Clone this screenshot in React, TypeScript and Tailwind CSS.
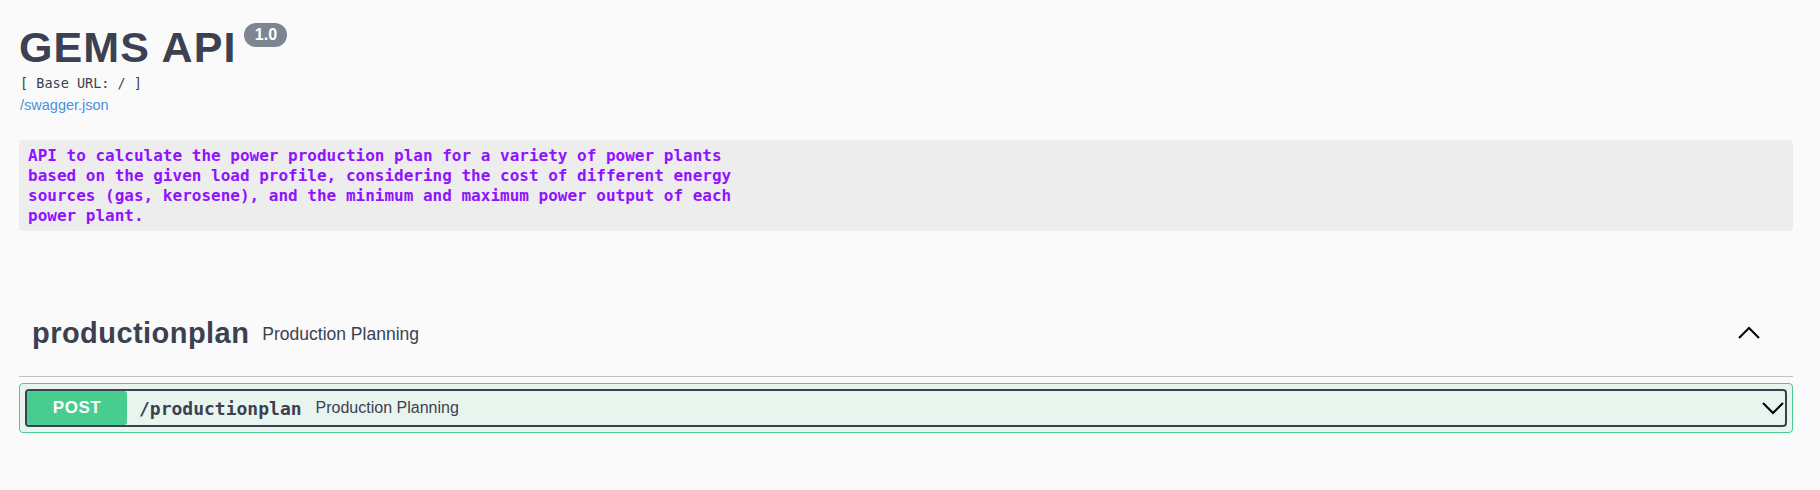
import React from 'react';

const sans = { fontFamily: '"Liberation Sans", Arial, sans-serif' };

const ChevronUp = () => (
  <svg width="22" height="13" viewBox="0 0 22 13" fill="none" className="block">
    <polyline points="1,12 11,2 21,12" stroke="#000" strokeWidth="2" />
  </svg>
);

const ChevronDown = () => (
  <svg width="22" height="13" viewBox="0 0 22 13" fill="none" className="block">
    <polyline points="1,1 11,11 21,1" stroke="#000" strokeWidth="2" />
  </svg>
);

export default function App() {
  return (
    <div className="min-h-screen bg-[#fafafa] pl-[19px] pr-[27px] pt-[23px] text-[#3b4151] font-['Liberation_Sans',Arial,sans-serif]">
      {/* info header */}
      <div className="flex items-start">
        <h2 className="text-[43px] leading-[48px] font-bold tracking-[1.1px] text-[#3b4151]">GEMS API</h2>
        <span className="ml-[8px] flex h-[24px] w-[43px] items-center justify-center rounded-full bg-[#7d8492] text-[16px] font-bold text-white">
          1.0
        </span>
      </div>
      <div className="mt-[4px] pl-[1px] font-['DejaVu_Sans_Mono',monospace] text-[13.5px] leading-[16px] text-[#3b4151]">
        [ Base URL: / ]
      </div>
      <div className="mt-[6px] pl-[1px] text-[14.5px] leading-[16px]">
        <a className="text-[#4990e2]" href="#">/swagger.json</a>
      </div>

      <div className="mt-[27px] rounded-[4px] bg-[#ededed] pl-[9px] pt-[6px] pb-[5px]">
        <pre className="font-['DejaVu_Sans_Mono',monospace] text-[16px] leading-[20px] font-bold text-[#9012fe]">
{`API to calculate the power production plan for a variety of power plants
based on the given load profile, considering the cost of different energy
sources (gas, kerosene), and the minimum and maximum power output of each
power plant.`}
        </pre>
      </div>

      {/* tag section */}
      <div className="mt-[61px] flex h-[85px] items-center border-b border-[#c1c3c7] pl-[13px] pr-[33px]">
        <span className="text-[29px] font-bold tracking-[0.45px]" style={sans}>productionplan</span>
        <span className="ml-[13px] text-[17.5px]" style={sans}>Production Planning</span>
        <div className="ml-auto mb-[3px]">
          <ChevronUp />
        </div>
      </div>

      <div className="mt-[6px] rounded-[4px] border border-[#49cc90] bg-[#e8f5ef] p-[5px]">
        <div className="flex h-[38px] items-center rounded-[4px] border-2 border-[#3b4151] pr-[1px]">
          <span className="flex h-full w-[100px] items-center justify-center rounded-[3px] bg-[#49cc90] text-[17px] font-bold tracking-[0.5px] text-white">
            POST
          </span>
          <span className="ml-[12px] font-['DejaVu_Sans_Mono',monospace] text-[18px] font-bold text-[#3b4151]">
            /productionplan
          </span>
          <span className="ml-[14px] text-[16px] text-[#3b4151]">Production Planning</span>
          <div className="ml-auto">
            <ChevronDown />
          </div>
        </div>
      </div>
    </div>
  );
}
